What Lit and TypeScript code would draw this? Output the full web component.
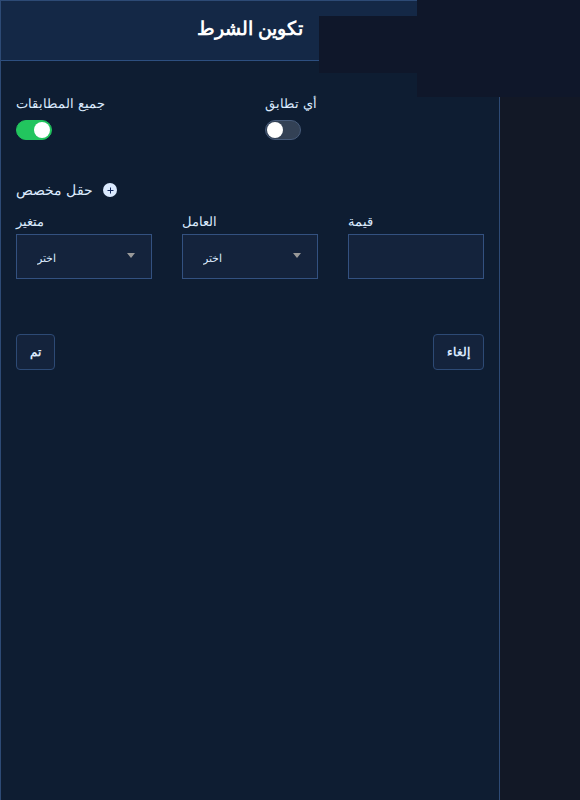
import { LitElement, html, css } from "lit";
import { customElement, property, state } from "lit/decorators.js";

@customElement("toggle-switch")
class ToggleSwitch extends LitElement {
  @property() label = "";
  @property({ type: Boolean }) checked = false;

  static styles = css`
    :host {
      display: block;
    }
    .field {
      display: flex;
      flex-direction: column;
      align-items: flex-start;
      gap: 4px;
    }
    .text {
      font-size: 13px;
      line-height: 24px;
      color: #dbeafe;
    }
    .switch {
      appearance: none;
      box-sizing: border-box;
      display: flex;
      align-items: center;
      width: 36px;
      height: 20px;
      margin: 0;
      padding: 0 1px;
      border: 1px solid #475b7a;
      border-radius: 10px;
      background: #334155;
      cursor: pointer;
    }
    .switch::before {
      content: "";
      width: 16px;
      height: 16px;
      border-radius: 50%;
      background: #ffffff;
    }
    .switch:checked {
      justify-content: flex-end;
      border-color: #22c55e;
      background: #22c55e;
    }
  `;

  render() {
    return html`<label class="field">
      <span class="text">${this.label}</span>
      <input
        class="switch"
        type="checkbox"
        role="switch"
        .checked=${this.checked}
        @change=${(e: Event) => (this.checked = (e.target as HTMLInputElement).checked)}
      />
    </label>`;
  }
}

@customElement("app-root")
class AppRoot extends LitElement {
  @state() private value = "";

  static styles = css`
    :host {
      display: block;
      position: relative;
      overflow: hidden;
      font-family: "Liberation Sans", "Noto Sans", sans-serif;
      color: #dbeafe;
      background: #121826;
    }
    .page {
      display: flex;
      min-height: 100vh;
      padding-right: 80px;
    }
    .panel {
      box-sizing: border-box;
      flex: 1;
      border: 1px solid #2d4a75;
      border-bottom: 0;
      background: #0e1d32;
    }
    .header {
      box-sizing: border-box;
      height: 60px;
      display: flex;
      align-items: center;
      justify-content: center;
      padding-bottom: 4px;
      border-bottom: 1px solid #2d4f80;
      background: #142846;
    }
    .title {
      margin: 0;
      font-size: 19px;
      line-height: 28px;
      font-weight: 700;
      color: #ffffff;
    }
    .body {
      display: flex;
      flex-direction: column;
      padding: 31px 15px;
    }
    .toggles {
      display: grid;
      grid-template-columns: repeat(2, 1fr);
      gap: 30px;
    }
    .custom {
      display: flex;
      align-items: center;
      gap: 10px;
      margin-top: 38px;
      font-size: 14px;
      line-height: 24px;
    }
    .add {
      display: flex;
      padding: 0;
      border: 0;
      background: none;
      cursor: pointer;
    }
    .fields {
      display: grid;
      grid-template-columns: repeat(3, 1fr);
      gap: 30px;
      margin-top: 8px;
    }
    .field {
      display: flex;
      flex-direction: column;
      font-size: 13px;
      line-height: 24px;
    }
    .box {
      display: grid;
      align-items: center;
    }
    .control {
      grid-area: 1 / 1;
      box-sizing: border-box;
      appearance: none;
      width: 100%;
      height: 45px;
      margin: 0;
      padding: 2px 20px 0;
      border: 1px solid #335180;
      border-radius: 0;
      background: #14233c;
      color: #dbeafe;
      font: inherit;
      font-size: 11px;
    }
    .arrow {
      grid-area: 1 / 1;
      justify-self: end;
      margin: 0 17px 2px 0;
      pointer-events: none;
    }
    .actions {
      display: flex;
      justify-content: space-between;
      margin-top: 55px;
    }
    .button {
      height: 36px;
      padding: 0 13px;
      border: 1px solid #2d4a75;
      border-radius: 4px;
      background: #14233c;
      color: #dbeafe;
      font: inherit;
      font-size: 12px;
      font-weight: 700;
      cursor: pointer;
    }
    .shade {
      position: absolute;
      background: #0f172a;
    }
    .shade-corner {
      top: 0;
      right: 0;
      width: 163px;
      height: 97px;
    }
    .shade-side {
      top: 16px;
      right: 163px;
      width: 98px;
      height: 57px;
    }
  `;

  private select(id: string, label: string) {
    return html`<div class="field">
      <label for=${id}>${label}</label>
      <div class="box">
        <select class="control" id=${id}>
          <option>اختر</option>
        </select>
        <svg class="arrow" width="8" height="5" viewBox="0 0 8 5" aria-hidden="true">
          <path d="M0 0H8L4 5Z" fill="#999999" />
        </svg>
      </div>
    </div>`;
  }

  render() {
    return html`
      <main class="page">
        <section class="panel">
          <header class="header"><h1 class="title">تكوين الشرط</h1></header>
          <div class="body">
            <div class="toggles">
              <toggle-switch label="جميع المطابقات" checked></toggle-switch>
              <toggle-switch label="أي تطابق"></toggle-switch>
            </div>
            <div class="custom">
              <span id="custom-label">حقل مخصص</span>
              <button class="add" type="button" aria-labelledby="custom-label">
                <svg width="14" height="14" viewBox="0 0 14 14" aria-hidden="true">
                  <circle cx="7" cy="7" r="7" fill="#dbeafe" />
                  <path d="M4.5 7.5H10.5M7.5 4.5V10.5" stroke="#14285c" stroke-width="1" fill="none" />
                </svg>
              </button>
            </div>
            <div class="fields">
              ${this.select("variable", "متغير")} ${this.select("operator", "العامل")}
              <div class="field">
                <label for="value">قيمة</label>
                <input
                  class="control"
                  id="value"
                  type="text"
                  .value=${this.value}
                  @input=${(e: Event) => (this.value = (e.target as HTMLInputElement).value)}
                />
              </div>
            </div>
            <div class="actions">
              <button class="button" type="button">تم</button>
              <button class="button" type="button">إلغاء</button>
            </div>
          </div>
        </section>
      </main>
      <div class="shade shade-side"></div>
      <div class="shade shade-corner"></div>
    `;
  }
}
